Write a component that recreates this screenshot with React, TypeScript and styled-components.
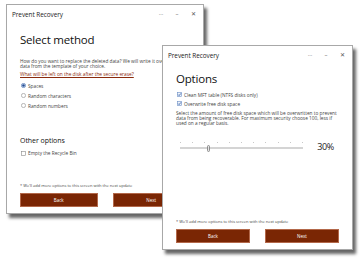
import React from 'react';
import styled, { createGlobalStyle } from 'styled-components';

const Global = createGlobalStyle`
  html, body { margin: 0; padding: 0; background: #fff; }
  body { width: 360px; height: 260px; overflow: hidden; font-family: "Open Sans", "Noto Sans", sans-serif; }
`;

const Desktop = styled.div`
  position: relative;
  width: 360px;
  height: 260px;
  background: #fff;
  overflow: hidden;
`;

const Window = styled.div<{ $x: number; $y: number; $w: number; $h: number }>`
  position: absolute;
  left: ${(p) => p.$x}px;
  top: ${(p) => p.$y}px;
  width: ${(p) => p.$w}px;
  height: ${(p) => p.$h}px;
  box-sizing: border-box;
  background: #fff;
  border: 1px solid #a8a8a8;
  box-shadow: 3px 4px 3px rgba(0, 0, 0, 0.6);
  display: flex;
  flex-direction: column;
`;

const TitleBar = styled.div`
  height: 18px;
  flex: none;
  display: flex;
  align-items: center;
  justify-content: space-between;
  padding: 0 5px 0 5px;
`;

const TitleText = styled.span`
  font-size: 6.4px;
  color: #222;
  letter-spacing: -0.05px;
`;

const Controls = styled.div`
  display: flex;
  align-items: center;
  gap: 6px;
`;

const Ctrl = styled.span`
  width: 10px;
  text-align: center;
  font-size: 6px;
  line-height: 6px;
  color: #555;
`;

const Body = styled.div`
  flex: 1;
  display: flex;
  flex-direction: column;
  padding: 0 13px 6px 13px;
`;

const Heading = styled.h1<{ $mt: number }>`
  margin: ${(p) => p.$mt}px 0 0 0;
  font-size: 11.5px;
  line-height: 16px;
  font-weight: 400;
  color: #111;
  letter-spacing: -0.2px;
`;

const Para = styled.p<{ $mt: number }>`
  margin: ${(p) => p.$mt}px 0 0 0;
  font-size: 4.75px;
  line-height: 5px;
  color: #444;
  white-space: nowrap;
`;

const Link = styled.a<{ $mt: number }>`
  display: block;
  margin-top: ${(p) => p.$mt}px;
  font-size: 4.8px;
  line-height: 5px;
  color: #8b2a0c;
  text-decoration: underline;
  white-space: nowrap;
`;

const OptionList = styled.div<{ $mt: number; $gap: number }>`
  margin-top: ${(p) => p.$mt}px;
  display: flex;
  flex-direction: column;
  gap: ${(p) => p.$gap}px;
`;

const OptionRow = styled.label`
  display: flex;
  align-items: center;
  gap: 2px;
  height: 5px;
  padding-left: 1px;
  font-size: 4.75px;
  color: #444;
  white-space: nowrap;
`;

const SubHeading = styled.h2<{ $mt: number }>`
  margin: ${(p) => p.$mt}px 0 0 0;
  font-size: 7px;
  line-height: 10px;
  font-weight: 500;
  color: #111;
  letter-spacing: -0.05px;
`;

const Footer = styled.div`
  margin-top: auto;
  display: flex;
  flex-direction: column;
  gap: 5px;
`;

const Note = styled.div`
  font-size: 4px;
  line-height: 5px;
  color: #444;
  white-space: nowrap;
`;

const Buttons = styled.div`
  display: flex;
  gap: 15px;
`;

const Button = styled.button`
  flex: 1;
  height: 14px;
  padding: 0;
  margin: 0;
  border: 1px solid #b3684a;
  background: #7a2604;
  color: #fff;
  font-family: "Open Sans", "Noto Sans", sans-serif;
  font-size: 4.5px;
`;

const SliderRow = styled.div<{ $mt: number }>`
  margin-top: ${(p) => p.$mt}px;
  display: flex;
  align-items: center;
  gap: 14px;
  padding: 0 5px 0 4px;
`;

const Track = styled.div`
  position: relative;
  flex: 1;
  height: 12px;
`;

const Rail = styled.div`
  position: absolute;
  left: 0;
  right: 0;
  top: 6px;
  height: 1.5px;
  background: #d4d4d4;
`;

const Ticks = styled.div`
  position: absolute;
  left: 0;
  right: 0;
  top: 1px;
  display: flex;
  justify-content: space-between;
`;

const Tick = styled.span`
  width: 1px;
  height: 1px;
  background: #c8c8c8;
`;

const Thumb = styled.div`
  position: absolute;
  top: 3.5px;
  width: 3px;
  height: 7px;
  margin-left: -1.5px;
  box-sizing: border-box;
  border: 0.8px solid #8d8d8d;
  border-radius: 1.5px;
  background: #e4e4e4;
`;

const Percent = styled.span`
  font-size: 9px;
  line-height: 10px;
  color: #222;
  letter-spacing: -0.3px;
`;

const Radio = ({ on }: { on?: boolean }) => (
  <svg width="5" height="5" viewBox="0 0 10 10">
    <circle cx="5" cy="5" r="4.2" fill="#fff" stroke={on ? '#2a5aa8' : '#8a8a8a'} strokeWidth="1.2" />
    {on && <circle cx="5" cy="5" r="2.6" fill="#1f4b95" />}
  </svg>
);

const Check = ({ on }: { on?: boolean }) => (
  <svg width="5" height="5" viewBox="0 0 10 10">
    <rect x="0.7" y="0.7" width="8.6" height="8.6" fill={on ? '#eef3fb' : '#fff'} stroke={on ? '#6d8fc6' : '#8a8a8a'} strokeWidth="1.2" />
    {on && <path d="M2.3 5.2 L4.2 7.2 L7.8 2.8" fill="none" stroke="#2554a0" strokeWidth="1.6" />}
  </svg>
);

const WinControls = () => (
  <Controls>
    <Ctrl>···</Ctrl>
    <Ctrl>–</Ctrl>
    <Ctrl>✕</Ctrl>
  </Controls>
);

export default function App() {
  const value = 23;
  return (
    <Desktop>
      <Global />
      <Window $x={6} $y={4} $w={198} $h={210}>
        <TitleBar>
          <TitleText>Prevent Recovery</TitleText>
          <WinControls />
        </TitleBar>
        <Body>
          <Heading $mt={9}>Select method</Heading>
          <Para $mt={11}>
            How do you want to replace the deleted data? We will write it over the deleted
            <br />
            data from the template of your choice.
          </Para>
          <Link $mt={2.5}>What will be left on the disk after the secure erase?</Link>
          <OptionList $mt={6.5} $gap={5}>
            <OptionRow>
              <Radio on />
              Spaces
            </OptionRow>
            <OptionRow>
              <Radio />
              Random characters
            </OptionRow>
            <OptionRow>
              <Radio />
              Random numbers
            </OptionRow>
          </OptionList>
          <SubHeading $mt={28}>Other options</SubHeading>
          <OptionList $mt={4.5} $gap={5}>
            <OptionRow>
              <Check />
              Empty the Recycle Bin
            </OptionRow>
          </OptionList>
          <Footer>
            <Note>* We'll add more options to this screen with the next update</Note>
            <Buttons>
              <Button>Back</Button>
              <Button>Next</Button>
            </Buttons>
          </Footer>
        </Body>
      </Window>

      <Window $x={162} $y={45} $w={191} $h={205}>
        <TitleBar>
          <TitleText>Prevent Recovery</TitleText>
          <WinControls />
        </TitleBar>
        <Body>
          <Heading $mt={7}>Options</Heading>
          <OptionList $mt={5} $gap={4}>
            <OptionRow>
              <Check on />
              Clean MFT table (NTFS disks only)
            </OptionRow>
            <OptionRow>
              <Check on />
              Overwrite free disk space
            </OptionRow>
          </OptionList>
          <Para $mt={5}>
            Select the amount of free disk space which will be overwritten to prevent
            <br />
            data from being recoverable. For maximum security choose 100, less if
            <br />
            used on a regular basis.
          </Para>
          <SliderRow $mt={15}>
            <Track>
              <Rail />
              <Ticks>
                {Array.from({ length: 11 }).map((_, i) => (
                  <Tick key={i} />
                ))}
              </Ticks>
              <Thumb style={{ left: `${value}%` }} />
            </Track>
            <Percent>30%</Percent>
          </SliderRow>
          <Footer>
            <Note>* We'll add more options to this screen with the next update</Note>
            <Buttons>
              <Button>Back</Button>
              <Button>Next</Button>
            </Buttons>
          </Footer>
        </Body>
      </Window>
    </Desktop>
  );
}
